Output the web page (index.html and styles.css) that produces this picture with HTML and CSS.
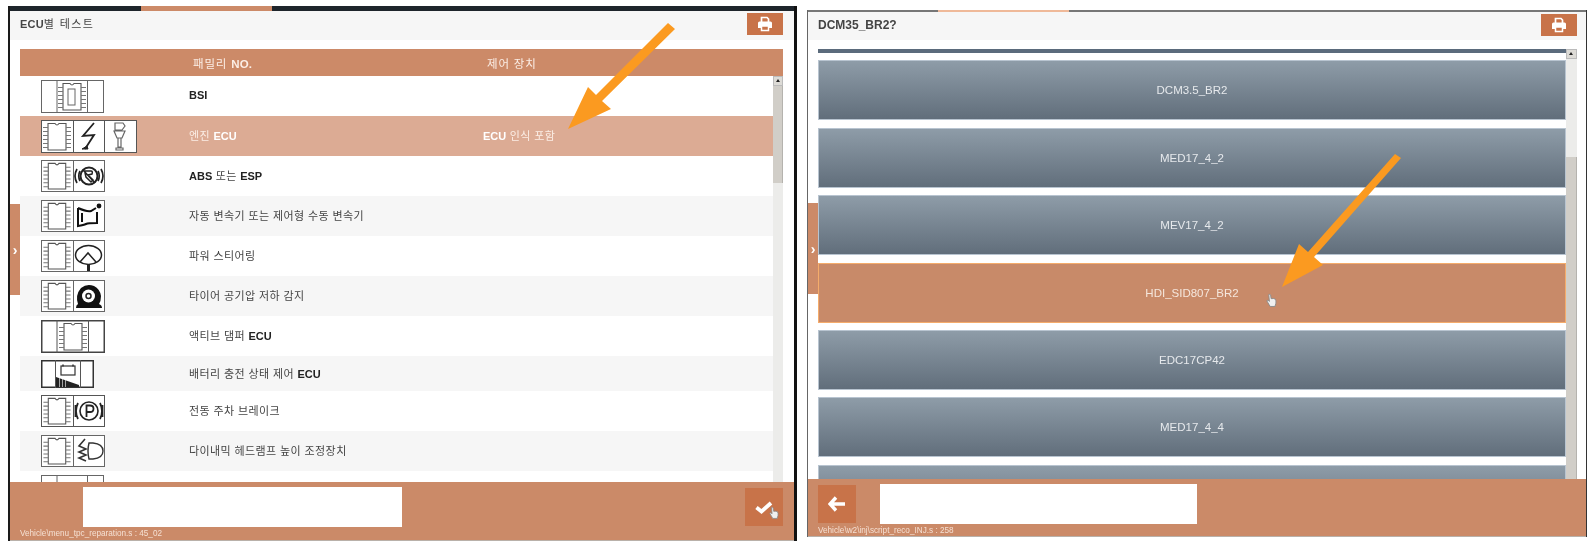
FILE: index.html
```html
<!DOCTYPE html>
<html lang="ko">
<head>
<meta charset="UTF-8">
<meta name="viewport" content="width=device-width, initial-scale=1.0">
<title>ECU별 테스트</title>
<link rel="stylesheet" href="styles.css">
</head>
<body>

<!-- shared icon parts -->
<svg class="sprite" aria-hidden="true">
    <symbol id="chip" viewBox="0 0 32 33">
        <path d="M7 3.500h7q2 3 4 0h7v26.500H7z" fill="#fff" stroke="#555" stroke-width="1.100"/>
        <path d="M2 7.500h5M2 11.500h5M2 15.500h5M2 19.500h5M2 23.500h5M2 27.500h5M25 7.500h5M25 11.500h5M25 15.500h5M25 19.500h5M25 23.500h5M25 27.500h5" stroke="#777" stroke-width="1.100"/>
    </symbol>
    <symbol id="printer" viewBox="0 0 16 16">
        <path d="M4.500 6V1.500h5.500L11.500 3v3" fill="none" stroke="#fff" stroke-width="1.700"/>
        <path d="M2.500 5.500h11q1.500 0 1.500 1.500v5H1V7q0-1.500 1.500-1.500z" fill="#fff"/>
        <path d="M4.500 10h7v4.500h-7z" fill="#c87349" stroke="#fff" stroke-width="1.500"/>
    </symbol>
    <symbol id="hand" viewBox="0 0 12 16">
        <path d="M3 1.500q1.300-1 2 .5l.6 4q3-.6 4.600.6 1 1.400.6 4.400l-1 3.500H4.500L1 8.500q0-1.300 1.500-.6l1.200 1.100z" fill="#f0f0f0" stroke="#8a8a8a" stroke-width="1"/>
    </symbol>
</svg>

<div class="panel panel-left">
    <div class="top-strip"><span class="top-tab"></span></div>
    <div class="title-bar">
        <span class="title"><b>ECU</b>별 테스트</span>
        <span class="print-btn"><svg class="print-icon"><use href="#printer"/></svg></span>
    </div>
    <div class="content">
        <div class="table-head">
            <span class="col-name">패밀리 <b>NO.</b></span>
            <span class="col-device">제어 장치</span>
        </div>
        <div class="table-body">
            <div class="rows">
                <div class="row">
                    <svg class="ecu-icon" width="63" height="33" viewBox="0 0 63 33">
                        <rect x=".5" y=".5" width="62" height="32" fill="#fff" stroke="#666"/>
                        <path d="M16 0v33M46.500 0v33" stroke="#666"/>
                        <use href="#chip" x="15" y="0" width="32" height="33"/>
                        <rect x="27" y="9" width="7" height="16" fill="none" stroke="#666"/>
                    </svg>
                    <span class="name"><b>BSI</b></span>
                </div>
                <div class="row row-active">
                    <svg class="ecu-icon" width="96" height="33" viewBox="0 0 96 33">
                        <rect x=".5" y=".5" width="95" height="32" fill="#fff" stroke="#555"/>
                        <path d="M32.500 0v33M63.500 0v33" stroke="#555"/>
                        <use href="#chip" x="0" y="0" width="32" height="33"/>
                        <path d="M53 3 42 16l11-1-9 14" fill="none" stroke="#222" stroke-width="1.800"/>
                        <path d="M41 29l5-3 1 3z" fill="#222" stroke="#222"/>
                        <path d="M74 3h8l2 3-3 4h-7zM73 11h11l-3 7h-5zM77 18h3v9h-3zM75 28h7v2h-7z" fill="#fff" stroke="#666" stroke-width="1.200"/>
                    </svg>
                    <span class="name">엔진 <b>ECU</b></span>
                    <span class="device"><b>ECU</b> 인식 포함</span>
                </div>
                <div class="row">
                    <svg class="ecu-icon" width="64" height="32" viewBox="0 0 64 32">
                        <rect x=".5" y=".5" width="63" height="31" fill="#fff" stroke="#666"/>
                        <path d="M32.500 0v32" stroke="#666"/>
                        <use href="#chip" x="0" y="0" width="32" height="32"/>
                        <circle cx="48" cy="16" r="8.500" fill="none" stroke="#222" stroke-width="2"/>
                        <path d="M36 9q-4 7 0 14M39 11q-2.500 5 0 10M60 9q4 7 0 14M57 11q2.500 5 0 10" fill="none" stroke="#222" stroke-width="1.700"/>
                        <path d="M44 11h6q2 0 1 3l-4 1 5 5-2 2-5-5-1-4zM42 10l12 13" fill="none" stroke="#222" stroke-width="1.500"/>
                    </svg>
                    <span class="name"><b>ABS</b> 또는 <b>ESP</b></span>
                </div>
                <div class="row">
                    <svg class="ecu-icon" width="64" height="32" viewBox="0 0 64 32">
                        <rect x=".5" y=".5" width="63" height="31" fill="#fff" stroke="#666"/>
                        <path d="M32.500 0v32" stroke="#666"/>
                        <use href="#chip" x="0" y="0" width="32" height="32"/>
                        <path d="M37 8q9 4 13 3l5-3M56 12v11q-9 0-11 1t-8 2V8M41 13v9" fill="none" stroke="#111" stroke-width="2"/>
                        <circle cx="58" cy="6" r="2.400" fill="#111"/>
                    </svg>
                    <span class="name">자동 변속기 또는 제어형 수동 변속기</span>
                </div>
                <div class="row">
                    <svg class="ecu-icon" width="64" height="32" viewBox="0 0 64 32">
                        <rect x=".5" y=".5" width="63" height="31" fill="#fff" stroke="#666"/>
                        <path d="M32.500 0v32" stroke="#666"/>
                        <use href="#chip" x="0" y="0" width="32" height="32"/>
                        <ellipse cx="47.500" cy="15" rx="13" ry="9.500" fill="none" stroke="#222" stroke-width="1.500"/>
                        <path d="M39 22l8-9 8 9" fill="none" stroke="#222" stroke-width="1.500"/>
                        <path d="M47.500 24v7" stroke="#222" stroke-width="3"/>
                    </svg>
                    <span class="name">파워 스티어링</span>
                </div>
                <div class="row">
                    <svg class="ecu-icon" width="64" height="32" viewBox="0 0 64 32">
                        <rect x=".5" y=".5" width="63" height="31" fill="#fff" stroke="#666"/>
                        <path d="M32.500 0v32" stroke="#666"/>
                        <use href="#chip" x="0" y="0" width="32" height="32"/>
                        <path d="M35 28q0-3 2-4-3-9 3-16 6-5 13-2 6 3 7 10 0 5-2 8 3 1 3 4z" fill="#111"/>
                        <circle cx="47.500" cy="16" r="6.500" fill="#fff"/>
                        <circle cx="47.500" cy="16" r="2.500" fill="none" stroke="#222" stroke-width="1.500"/>
                    </svg>
                    <span class="name">타이어 공기압 저하 감지</span>
                </div>
                <div class="row">
                    <svg class="ecu-icon" width="64" height="33" viewBox="0 0 64 33">
                        <rect x=".75" y=".75" width="62.500" height="31.500" fill="#fff" stroke="#444" stroke-width="1.500"/>
                        <path d="M16 0v33M47.500 0v33" stroke="#555"/>
                        <use href="#chip" x="16" y="0" width="32" height="33"/>
                    </svg>
                    <span class="name">액티브 댐퍼 <b>ECU</b></span>
                </div>
                <div class="row row-short">
                    <svg class="ecu-icon" width="53" height="28" viewBox="0 0 53 28">
                        <rect x=".75" y=".75" width="51.500" height="26.500" fill="#fff" stroke="#333" stroke-width="1.500"/>
                        <path d="M14.500 0v28M39.500 0v28" stroke="#555"/>
                        <rect x="20" y="6" width="14" height="9" fill="none" stroke="#333" stroke-width="1.200"/>
                        <path d="M22 4.500v2M32 4.500v2" stroke="#333" stroke-width="1.500"/>
                        <path d="M15 17l23 8v2H15z" fill="#222"/>
                        <path d="M18.500 18v9M21.500 19v8M24.500 20v7" stroke="#ddd" stroke-width=".7"/>
                    </svg>
                    <span class="name">배터리 충전 상태 제어 <b>ECU</b></span>
                </div>
                <div class="row">
                    <svg class="ecu-icon" width="64" height="32" viewBox="0 0 64 32">
                        <rect x=".5" y=".5" width="63" height="31" fill="#fff" stroke="#555"/>
                        <path d="M32.500 0v32" stroke="#555"/>
                        <use href="#chip" x="0" y="0" width="32" height="32"/>
                        <circle cx="48" cy="16" r="9" fill="#fff" stroke="#222" stroke-width="1.600"/>
                        <path d="M37 8q-4 8 0 16M59 8q4 8 0 16M34.500 10v12M61.500 10v12" fill="none" stroke="#222" stroke-width="1.800"/>
                        <path d="M45.500 22V10.500h3.500q3.500 0 3.500 3.300T49 17h-3.500" fill="none" stroke="#222" stroke-width="1.800"/>
                    </svg>
                    <span class="name">전동 주차 브레이크</span>
                </div>
                <div class="row">
                    <svg class="ecu-icon" width="64" height="32" viewBox="0 0 64 32">
                        <rect x=".5" y=".5" width="63" height="31" fill="#fff" stroke="#666"/>
                        <path d="M32.500 0v32" stroke="#666"/>
                        <use href="#chip" x="0" y="0" width="32" height="32"/>
                        <path d="M48 8h4q10 1 10 8t-10 8h-4q-2-8 0-16z" fill="none" stroke="#333" stroke-width="1.400"/>
                        <path d="M44 4l-6 7 7 3-7 3 7 3-7 3 7 3" fill="none" stroke="#333" stroke-width="1.600"/>
                    </svg>
                    <span class="name">다이내믹 헤드램프 높이 조정장치</span>
                </div>
                <div class="row">
                    <svg class="ecu-icon" width="63" height="33" viewBox="0 0 63 33">
                        <rect x=".5" y=".5" width="62" height="32" fill="#fff" stroke="#666"/>
                        <path d="M16 0v33M46.500 0v33" stroke="#666"/>
                    </svg>
                </div>
            </div>
            <div class="scrollbar scrollbar-left">
                <span class="scroll-up"></span>
                <span class="scroll-thumb"></span>
            </div>
        </div>
    </div>
    <div class="footer">
        <div class="footer-main">
            <span class="input-box"></span>
            <span class="action-btn">
                <svg class="action-icon" width="18" height="13" viewBox="0 0 18 13"><path d="M1.500 6.500 6.500 10.500 16 2" fill="none" stroke="#fff" stroke-width="3.800"/></svg>
            </span>
        </div>
        <div class="status">Vehicle\menu_tpc_reparation.s : 45_02</div>
    </div>
    <span class="side-tab">›</span>
</div>

<div class="panel panel-right">
    <div class="top-strip"><span class="top-tab"></span></div>
    <div class="title-bar">
        <span class="title title-code">DCM35_BR2?</span>
        <span class="print-btn"><svg class="print-icon"><use href="#printer"/></svg></span>
    </div>
    <div class="content">
        <div class="table-body">
            <div class="choices">
                <div class="choice choice-cut"></div>
                <div class="choice">DCM3.5_BR2</div>
                <div class="choice">MED17_4_2</div>
                <div class="choice">MEV17_4_2</div>
                <div class="choice choice-on">HDI_SID807_BR2</div>
                <div class="choice">EDC17CP42</div>
                <div class="choice">MED17_4_4</div>
                <div class="choice"></div>
            </div>
            <div class="scrollbar scrollbar-right">
                <span class="scroll-up"></span>
                <span class="scroll-thumb"></span>
            </div>
        </div>
    </div>
    <div class="footer">
        <div class="footer-main">
            <span class="action-btn">
                <svg class="action-icon" width="18" height="16" viewBox="0 0 18 16"><path d="M8 1.500 2 8l6 6.500M2.500 8H17" fill="none" stroke="#fff" stroke-width="3.400"/></svg>
            </span>
            <span class="input-box"></span>
        </div>
        <div class="status">Vehicle\w2\inj\script_reco_INJ.s : 258</div>
    </div>
    <span class="side-tab">›</span>
</div>

<!-- arrows and cursors drawn on top of the two screenshots -->
<svg class="overlay" width="1596" height="548" viewBox="0 0 1596 548">
    <path d="M668 23 675 29 602 101 611 109 568 129 588 87 596 95z" fill="#fb9a20"/>
    <path d="M1395 154 1401 158 1314 257 1323 265 1282 287 1299 244 1308 252z" fill="#fb9a20"/>
    <use href="#hand" x="1266" y="293" width="11" height="15"/>
    <use href="#hand" x="769" y="506" width="10" height="14"/>
</svg>

</body>
</html>
```

FILE: styles.css
```css
body {
    margin: 0;
    width: 1596px;
    height: 548px;
    display: flex;
    align-items: flex-start;
    background: white;
    font-family: "Liberation Sans", "Noto Sans CJK KR", sans-serif;
    color: #333;
    overflow: hidden;
    position: relative;
}
.sprite {
    position: absolute;
    width: 0;
    height: 0;
}
.overlay {
    position: absolute;
    left: 0;
    top: 0;
    pointer-events: none;
    filter: blur(0.4px);
}

/* the two panels */
.panel {
    position: relative;
    display: flex;
    flex-direction: column;
    box-sizing: border-box;
    background: white;
    filter: blur(0.6px);
}
.panel-left {
    width: 789px;
    height: 535px;
    margin: 6px 0 0 8px;
    border-left: 2px solid #1a1a1a;
    border-right: 3px solid #111;
}
.panel-right {
    width: 780px;
    height: 527px;
    margin: 10px 0 0 10px;
    border-left: 1px solid #666;
    border-right: 1px solid #333;
}
.top-strip {
    height: 5px;
    flex: none;
    display: flex;
    background: #1e252b;
}
.panel-right .top-strip {
    height: 2px;
    background: #777;
}
.top-tab {
    width: 131px;
    margin-left: 131px;
    background: #cc8a68;
}
.panel-right .top-tab {
    margin-left: 130px;
    background: #efb999;
}
.title-bar {
    height: 29px;
    flex: none;
    display: flex;
    align-items: flex-start;
    justify-content: space-between;
    box-sizing: border-box;
    padding: 2px 11px 0 10px;
    background: #f6f6f6;
}
.panel-right .title-bar {
    height: 28px;
    padding-right: 9px;
}
.title {
    font-size: 11px;
    line-height: 22px;
    color: #444;
    letter-spacing: 1.4px;
}
.title b {
    letter-spacing: 0.2px;
}
.title-code {
    font-size: 12px;
    font-weight: bold;
    line-height: 23px;
    letter-spacing: 0;
}
.print-btn {
    width: 36px;
    height: 22px;
    display: flex;
    align-items: center;
    justify-content: center;
    background: #c87349;
}
.print-icon {
    width: 16px;
    height: 16px;
}

/* table on the left, choices on the right */
.content {
    flex: 1;
    min-height: 0;
    display: flex;
    flex-direction: column;
    padding: 9px 11px 0 10px;
}
.panel-right .content {
    padding: 9px 9px 0 10px;
}
.table-head {
    height: 27px;
    flex: none;
    display: flex;
    align-items: center;
    background: #cc8a68;
    color: #fbeee6;
    font-size: 11.5px;
    letter-spacing: 0.8px;
}
.table-head b {
    letter-spacing: 0.2px;
}
.col-name {
    margin-left: 173px;
    width: 294px;
}
.table-body {
    flex: 1;
    min-height: 0;
    display: flex;
    overflow: hidden;
}
.rows {
    flex: 1;
    min-width: 0;
}
.row {
    height: 40px;
    display: grid;
    grid-template-columns: 148px 294px 1fr;
    align-items: center;
    box-sizing: border-box;
    padding-left: 21px;
    font-size: 11px;
    letter-spacing: 0.4px;
    color: #444;
}
.row:nth-child(even) {
    background: #f6f6f6;
}
.row b {
    color: #222;
    letter-spacing: 0;
}
.row-short {
    height: 35px;
}
.row .name,
.row .device {
    margin-bottom: 2px;
}
.row-active,
.row-active:nth-child(even) {
    background: #dcab94;
    color: #fbeee6;
}
.row-active b {
    color: #fff;
}
.scrollbar {
    flex: none;
    width: 10px;
    display: flex;
    flex-direction: column;
    background: #ececea;
}
.scrollbar-right {
    width: 11px;
}
.scroll-up {
    height: 10px;
    flex: none;
    background: #dddbd6;
    border: 1px solid #bbb;
    box-sizing: border-box;
    position: relative;
}
.scroll-up::after {
    content: "";
    position: absolute;
    left: 2px;
    top: 2px;
    border: 2.5px solid transparent;
    border-top: 0;
    border-bottom: 3px solid #222;
}
.scroll-thumb {
    display: block;
    background: #d1cec8;
    border-right: 1px solid #b5b3ae;
    box-sizing: border-box;
}
.scrollbar-left .scroll-thumb {
    height: 97px;
}
.scrollbar-right .scroll-thumb {
    height: 322px;
    margin-top: 98px;
}
.choices {
    flex: 1;
    min-width: 0;
}
.choice {
    height: 60px;
    margin-bottom: 7.4px;
    box-sizing: border-box;
    display: flex;
    align-items: center;
    justify-content: center;
    background: linear-gradient(#8e9ca8, #616e7b);
    border: 1px solid #b8c4d0;
    color: #e6e9ec;
    font-size: 11.5px;
}
.choice-cut {
    height: 4px;
    border: 0;
    background: #5b6b7c;
}
.choice-on {
    background: #c88a69;
    border: 1px solid #f5ac6b;
    color: #f5e6dc;
}

/* footer */
.footer {
    height: 59px;
    flex: none;
    display: flex;
    flex-direction: column;
    box-sizing: border-box;
    background: #cb8a68;
    border-bottom: 1px solid #b9b1aa;
    padding: 5px 11px 0 10px;
}
.panel-right .footer {
    height: 58px;
}
.footer-main {
    flex: 1;
    display: flex;
    align-items: flex-start;
    justify-content: space-between;
}
.panel-left .input-box {
    width: 319px;
    height: 40px;
    margin-left: 63px;
}
.panel-right .footer-main {
    justify-content: flex-start;
}
.panel-right .input-box {
    width: 317px;
    height: 40px;
    margin-left: 24px;
}
.input-box {
    background: white;
}
.action-btn {
    width: 38px;
    height: 38px;
    display: flex;
    align-items: center;
    justify-content: center;
    background: #c87349;
    margin-top: 1px;
}
.status {
    height: 13px;
    font-size: 8.2px;
    line-height: 13px;
    color: #f5e0d3;
}
.side-tab {
    position: absolute;
    left: 0;
    top: 198px;
    width: 10px;
    height: 91px;
    display: flex;
    align-items: center;
    justify-content: center;
    background: #cc8a68;
    color: white;
    font-size: 14px;
    font-weight: bold;
}
.panel-right .side-tab {
    top: 193px;
}
```
